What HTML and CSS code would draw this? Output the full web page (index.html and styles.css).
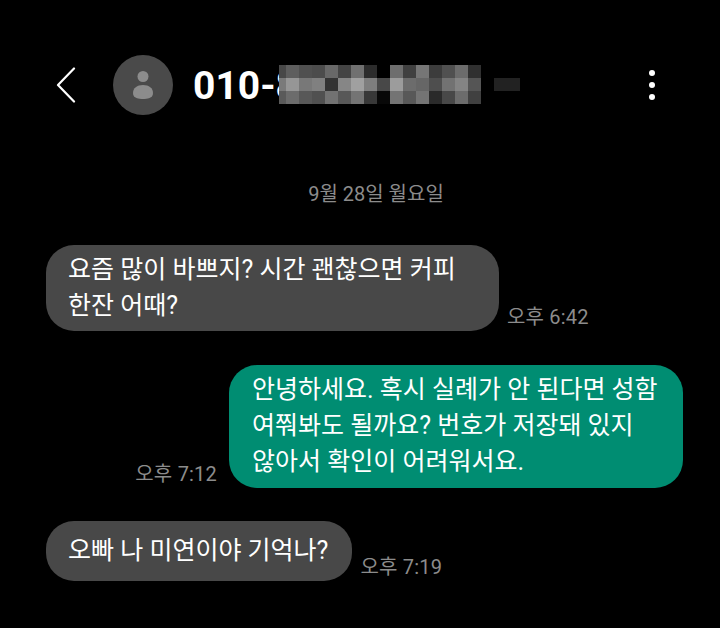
FILE: index.html
```html
<!DOCTYPE html>
<html lang="ko">
<head>
    <meta charset="UTF-8">
    <meta name="viewport" content="width=device-width, initial-scale=1.0">
    <title>메시지</title>
    <link rel="stylesheet" href="styles.css">
</head>
<body>
    <header class="topbar">
        <svg class="back" width="20" height="36" viewBox="0 0 20 36" fill="none">
            <path d="M18 1.500 2 18l16 16.500" stroke="#fff" stroke-width="2.200" stroke-linecap="round" stroke-linejoin="round"/>
        </svg>
        <div class="avatar">
            <svg width="20" height="28" viewBox="0 0 20 28">
                <circle cx="10" cy="5.500" r="5.500" fill="#8c8c8c"/>
                <path d="M0 22C0 17 4 14 10 14s10 3 10 8c0 3-1.500 4-3.500 5-2 .8-4.500 1-6.500 1s-4.500-.2-6.500-1C1.500 26 0 25 0 22z" fill="#8c8c8c"/>
            </svg>
        </div>
        <div class="title">
            <span class="number">010-8</span>
            <!-- blurred part of the phone number -->
            <svg class="mosaic" width="241" height="39" viewBox="0 0 241 39" shape-rendering="crispEdges">
                <g>
                    <rect x="0" y="0" width="7" height="13" fill="#484848"/><rect x="7" y="0" width="13" height="13" fill="#5e5e5e"/><rect x="20" y="0" width="13" height="13" fill="#505050"/><rect x="33" y="0" width="13" height="13" fill="#4c4c4c"/><rect x="46" y="0" width="13" height="13" fill="#686868"/><rect x="59" y="0" width="13" height="13" fill="#444444"/><rect x="72" y="0" width="13" height="13" fill="#707070"/><rect x="85" y="0" width="13" height="13" fill="#2c2c2c"/><rect x="98" y="0" width="13" height="13" fill="#000000"/><rect x="111" y="0" width="13" height="13" fill="#6e6e6e"/><rect x="124" y="0" width="13" height="13" fill="#404040"/><rect x="137" y="0" width="13" height="13" fill="#767676"/><rect x="150" y="0" width="13" height="13" fill="#3c3c3c"/><rect x="163" y="0" width="13" height="13" fill="#505050"/><rect x="176" y="0" width="13" height="13" fill="#6c6c6c"/><rect x="189" y="0" width="13" height="13" fill="#303030"/>
                </g>
                <g>
                    <rect x="0" y="13" width="7" height="13" fill="#7a7a7a"/><rect x="7" y="13" width="13" height="13" fill="#969696"/><rect x="20" y="13" width="13" height="13" fill="#787878"/><rect x="33" y="13" width="13" height="13" fill="#808080"/><rect x="46" y="13" width="13" height="13" fill="#333333"/><rect x="59" y="13" width="13" height="13" fill="#868686"/><rect x="72" y="13" width="13" height="13" fill="#a0a0a0"/><rect x="85" y="13" width="13" height="13" fill="#7e7e7e"/><rect x="98" y="13" width="13" height="13" fill="#484848"/><rect x="111" y="13" width="13" height="13" fill="#9c9c9c"/><rect x="124" y="13" width="13" height="13" fill="#6c6c6c"/><rect x="137" y="13" width="13" height="13" fill="#666666"/><rect x="150" y="13" width="13" height="13" fill="#4e4e4e"/><rect x="163" y="13" width="13" height="13" fill="#727272"/><rect x="176" y="13" width="13" height="13" fill="#848484"/><rect x="189" y="13" width="13" height="13" fill="#555555"/>
                    <rect x="215" y="13" width="26" height="13" fill="#222222"/>
                </g>
                <g>
                    <rect x="0" y="26" width="7" height="13" fill="#5a5a5a"/><rect x="7" y="26" width="13" height="13" fill="#6c6c6c"/><rect x="20" y="26" width="13" height="13" fill="#585858"/><rect x="33" y="26" width="13" height="13" fill="#505050"/><rect x="46" y="26" width="13" height="13" fill="#727272"/><rect x="59" y="26" width="13" height="13" fill="#585858"/><rect x="72" y="26" width="13" height="13" fill="#747474"/><rect x="85" y="26" width="13" height="13" fill="#383838"/><rect x="98" y="26" width="13" height="13" fill="#080808"/><rect x="111" y="26" width="13" height="13" fill="#747474"/><rect x="124" y="26" width="13" height="13" fill="#585858"/><rect x="137" y="26" width="13" height="13" fill="#747474"/><rect x="150" y="26" width="13" height="13" fill="#2a2a2a"/><rect x="163" y="26" width="13" height="13" fill="#484848"/><rect x="176" y="26" width="13" height="13" fill="#6c6c6c"/><rect x="189" y="26" width="13" height="13" fill="#404040"/>
                </g>
            </svg>
        </div>
        <div class="more"><span></span><span></span><span></span></div>
    </header>

    <main class="chat">
        <p class="date">9월 28일 월요일</p>

        <div class="row row-in first">
            <div class="bubble in wide">요즘 많이 바쁘지? 시간 괜찮으면 커피<br>한잔 어때?</div>
            <span class="time">오후 6:42</span>
        </div>

        <div class="row row-out">
            <span class="time">오후 7:12</span>
            <div class="bubble out wide">안녕하세요. 혹시 실례가 안 된다면 성함<br>여쭤봐도 될까요? 번호가 저장돼 있지<br>않아서 확인이 어려워서요.</div>
        </div>

        <div class="row row-in last">
            <div class="bubble in single">오빠 나 미연이야 기억나?</div>
            <span class="time">오후 7:19</span>
        </div>
    </main>
</body>
</html>
```

FILE: styles.css
```css
* { box-sizing: border-box; }
html, body { height: 100%; }
body { margin: 0; background: #000; color: #fff; font-family: Roboto, "Noto Sans CJK KR", sans-serif; overflow: hidden; }

.topbar { display: flex; align-items: center; height: 60px; margin-top: 55px; padding: 0 65px 0 56px; }
.back { flex: none; margin-right: 37px; }
.avatar { flex: none; width: 60px; height: 60px; border-radius: 50%; background: #4a4a4a; display: flex; align-items: center; justify-content: center; margin-right: 20px; }
.title { flex: 1; position: relative; height: 60px; }
.number { font-size: 39px; font-weight: 700; line-height: 62px; }
.mosaic { position: absolute; left: 86px; top: 10px; }
.more { display: flex; flex-direction: column; gap: 6px; }
.more span { width: 6px; height: 6px; border-radius: 50%; background: #fff; }

.chat { display: flex; flex-direction: column; padding: 0 37px 0 46px; }
.date { margin: 64px 0 0; padding-left: 23px; text-align: center; font-size: 20px; line-height: 30px; color: #8c8c8c; }

.row { display: flex; align-items: flex-end; }
.row-out { justify-content: flex-end; margin-top: 34px; }
.row-in.first { margin-top: 36px; }
.row-in.last { margin-top: 33px; }

.bubble { font-size: 25px; line-height: 36px; padding: 7px 22px 7px 23px; border-radius: 28px; }
.wide { width: 454px; }
.row-in .wide { width: 453px; padding-left: 22px; }
.single { padding: 12px 24px 12px 22px; }
.in { background: #484848; }
.out { background: #008d72; padding-bottom: 8px; }

.time { font-size: 20px; letter-spacing: .2px; line-height: 28px; color: #8c8c8c; white-space: nowrap; }
.row-in .time { margin-left: 8px; }
.row-out .time { margin-right: 12px; }
```
